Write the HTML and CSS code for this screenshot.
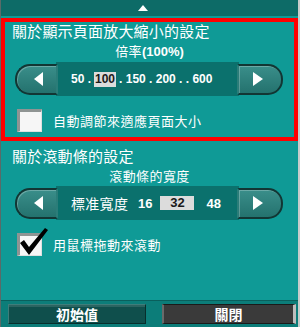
FILE: index.html
```html
<!DOCTYPE html>
<html lang="zh-Hant">
<head>
  <meta charset="UTF-8" />
  <title>設定</title>
  <link rel="stylesheet" href="styles.css">
</head>
<body>
  <div class="panel">
    <div class="topbar"><span class="up-arrow"></span></div>

    <section class="group zoom-group">
      <h1 class="group-title">關於顯示頁面放大縮小的設定</h1>
      <div class="caption">倍率<span class="latin">(100%)</span></div>
      <div class="slider">
        <button class="step step-left"><span class="tri tri-left"></span></button>
        <div class="track values"><span>50 .</span><span class="current">100</span><span>. 150 . 200 . . 600</span></div>
        <button class="step step-right"><span class="tri tri-right"></span></button>
      </div>
      <label class="check-row">
        <span class="checkbox"></span>
        <span class="check-label">自動調節來適應頁面大小</span>
      </label>
    </section>

    <section class="group scroll-group">
      <h1 class="group-title">關於滾動條的設定</h1>
      <div class="caption">滾動條的寬度</div>
      <div class="slider">
        <button class="step step-left"><span class="tri tri-left"></span></button>
        <div class="track widths">
          <span class="width-name">標准寬度</span>
          <span class="num">16</span>
          <span class="num current-box">32</span>
          <span class="num">48</span>
        </div>
        <button class="step step-right"><span class="tri tri-right"></span></button>
      </div>
      <label class="check-row">
        <span class="checkbox checked">
          <svg class="tick" width="32" height="30" viewBox="0 0 32 30">
            <path d="M2 16 L6 13 L11 20 L27 1 L30 3 L11 28 Z" fill="#000"/>
          </svg>
        </span>
        <span class="check-label">用鼠標拖動來滾動</span>
      </label>
    </section>

    <div class="spacer"></div>

    <footer class="footer">
      <button class="foot-btn reset-btn">初始值</button>
      <button class="foot-btn close-btn">關閉</button>
    </footer>
  </div>
</body>
</html>
```

FILE: styles.css
```css
html, body {
  margin: 0;
  padding: 0;
  background: #0f9a96;
  font-family: "Noto Sans CJK TC", "Liberation Sans", sans-serif;
  color: white;
}

.panel {
  width: 300px;
  height: 327px;
  box-sizing: border-box;
  border-left: 1px solid #5a6a68;
  border-right: 2px solid #c8cccb;
  display: flex;
  flex-direction: column;
  overflow: hidden;
}

/* top strip with the little arrow */
.topbar {
  height: 16px;
  flex-shrink: 0;
  background: #0d6b67;
  display: flex;
  align-items: center;
  justify-content: center;
  padding-right: 14px;
}
.up-arrow {
  width: 0;
  height: 0;
  border-left: 5px solid transparent;
  border-right: 5px solid transparent;
  border-bottom: 6px solid white;
}

.group {
  display: flex;
  flex-direction: column;
}

.zoom-group {
  margin-top: 2px;
  border: 4px solid #ff0000;
  padding: 0 0 5px;
}

.scroll-group {
  padding: 6px 4px 0;
}

.group-title {
  margin: 0;
  font-size: 15px;
  font-weight: normal;
  line-height: 18px;
  padding-left: 7px;
  letter-spacing: 0.2px;
}

.caption {
  margin-top: 3px;
  text-align: center;
  font-size: 13px;
  line-height: 16px;
  letter-spacing: 0.4px;
}
.caption .latin {
  font-family: "Liberation Sans", sans-serif;
  font-weight: bold;
  font-size: 13px;
  letter-spacing: 0;
}

/* slider row: two rounded step buttons around a darker track */
.slider {
  display: flex;
  align-items: center;
  margin: 2px 11px 0 10px;
  height: 34px;
}
.track {
  flex: 1;
  min-width: 0;
  height: 34px;
  background: #0b716d;
  display: flex;
  align-items: center;
  margin: 0 -2px;
  box-sizing: border-box;
}
.step {
  flex-shrink: 0;
  position: relative;
  z-index: 1;
  width: 43px;
  height: 31px;
  padding: 0;
  border: 2px solid #123634;
  background: linear-gradient(#3a8e8a, #24726e);
  display: flex;
  align-items: center;
  justify-content: center;
  box-shadow: inset 1px 1px 0 rgba(255, 255, 255, 0.25);
}
.step-left {
  border-radius: 15px 2px 2px 15px;
  border-right-color: #2b7d79;
  padding-left: 4px;
}
.step-right {
  width: 46px;
  border-radius: 2px 15px 15px 2px;
  border-left-color: #2b7d79;
  padding-right: 4px;
}
.tri {
  width: 0;
  height: 0;
  border-top: 7px solid transparent;
  border-bottom: 7px solid transparent;
}
.tri-left { border-right: 9px solid white; }
.tri-right { border-left: 10px solid white; }

.values {
  padding-left: 15px;
  font-family: "Liberation Sans", sans-serif;
  font-weight: bold;
  font-size: 12px;
  white-space: nowrap;
  gap: 3px;
}
.values .current {
  background: #dcdcdc;
  color: #1a1a1a;
  padding: 0 1px;
  line-height: 15px;
}

.widths {
  padding-left: 15px;
}
.width-name {
  font-size: 14px;
  width: 67px;
  letter-spacing: 0.3px;
}
.num {
  font-family: "Liberation Sans", sans-serif;
  font-weight: bold;
  font-size: 13px;
}
.current-box {
  background: #dcdcdc;
  color: #1a1a1a;
  width: 34px;
  height: 14px;
  line-height: 14px;
  text-align: center;
  margin: 0 12px 0 8px;
}

/* checkbox rows */
.check-row {
  display: flex;
  align-items: center;
  margin: 13px 0 0 12px;
}
.checkbox {
  position: relative;
  width: 21px;
  height: 19px;
  background: #f6f6f6;
  border-left: 3px solid #8f9493;
  border-top: 3px solid #8f9493;
  border-right: 1px solid #e0e0e0;
  border-bottom: 1px solid #e0e0e0;
}
.tick {
  position: absolute;
  left: -2px;
  top: -9px;
}
.check-label {
  margin-left: 11px;
  font-size: 13px;
  letter-spacing: 0.5px;
}

.spacer {
  flex: 1;
}

/* bottom button bar */
.footer {
  height: 27px;
  flex-shrink: 0;
  background: #0c7d79;
  border-top: 1px solid #0a5f5c;
  display: flex;
  align-items: center;
  gap: 16px;
  padding: 0 1px 0 7px;
  box-sizing: border-box;
}
.foot-btn {
  height: 20px;
  padding: 0;
  font-family: "Noto Sans CJK TC", sans-serif;
  font-size: 14px;
  font-weight: bold;
  color: white;
  line-height: 16px;
}
.reset-btn {
  width: 138px;
  background: #0f4f4c;
  border: 1px solid #072e2c;
  border-top-color: #3e7d7a;
  border-left-color: #3e7d7a;
  box-shadow: inset 0 2px 0 rgba(255, 255, 255, 0.12);
}
.close-btn {
  width: 134px;
  background: #3a3a3a;
  border: 1px solid #1a1a1a;
  border-left: 2px solid #6a6a6a;
  border-right: 3px solid #bdbdbd;
}
```
